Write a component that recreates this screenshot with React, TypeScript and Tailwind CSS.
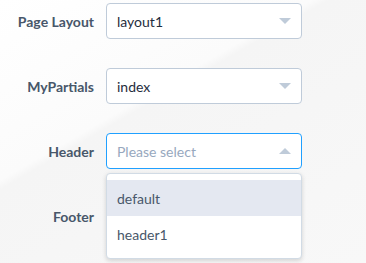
import React from "react";

const Caret = ({ up = false }: { up?: boolean }) => (
  <svg width="12" height="6" viewBox="0 0 12 6" className="shrink-0">
    <path d={up ? "M6 0 L12 6 L0 6 Z" : "M0 0 L12 0 L6 6 Z"} fill="#bfcbd9" />
  </svg>
);

function Row({
  label,
  value,
  placeholder,
  focused = false,
  children,
}: {
  label: string;
  value?: string;
  placeholder?: string;
  focused?: boolean;
  children?: React.ReactNode;
}) {
  return (
    <div className="flex items-center h-9">
      <label className="w-[106px] pr-3 text-right text-[14px] font-bold text-[#48576a]">
        {label}
      </label>
      <div className="relative">
        <div
          className={`flex items-center justify-between w-[196px] h-9 rounded bg-white border pl-[10px] pr-[10px] ${
            focused ? "border-[#20a0ff]" : "border-[#bfcbd9]"
          }`}
        >
          {value ? (
            <span className="text-[14px] text-[#1f2d3d]">{value}</span>
          ) : (
            <span className="text-[14px] text-[#97a8be]">{placeholder}</span>
          )}
          {label !== "Footer" && <Caret up={focused} />}
        </div>
        {children}
      </div>
    </div>
  );
}

export default function App() {
  return (
    <div
      className="w-[366px] h-[263px] overflow-hidden bg-[#f7f7f7] font-['Lato',sans-serif]"
      style={{
        backgroundImage:
          "linear-gradient(150deg, #ffffff 0%, #fbfbfb 38%, #f5f5f5 40%, #f8f8f8 100%)",
      }}
    >
      <div className="flex flex-col gap-[29px] pt-[3px]">
        <Row label="Page Layout" value="layout1" />
        <Row label="MyPartials" value="index" />
        <Row label="Header" placeholder="Please select" focused>
          <div className="absolute z-10 left-0 top-10 w-[196px] bg-white border border-[#d1dbe5] rounded-sm py-[6px] shadow-[0_2px_4px_rgba(0,0,0,0.12),0_0_6px_rgba(0,0,0,0.04)]">
            <div className="h-9 px-[10px] flex items-center bg-[#e4e8f1] text-[14px] text-[#48576a]">
              default
            </div>
            <div className="h-9 px-[10px] flex items-center text-[14px] text-[#48576a]">
              header1
            </div>
          </div>
        </Row>
        <Row label="Footer" />
      </div>
    </div>
  );
}
